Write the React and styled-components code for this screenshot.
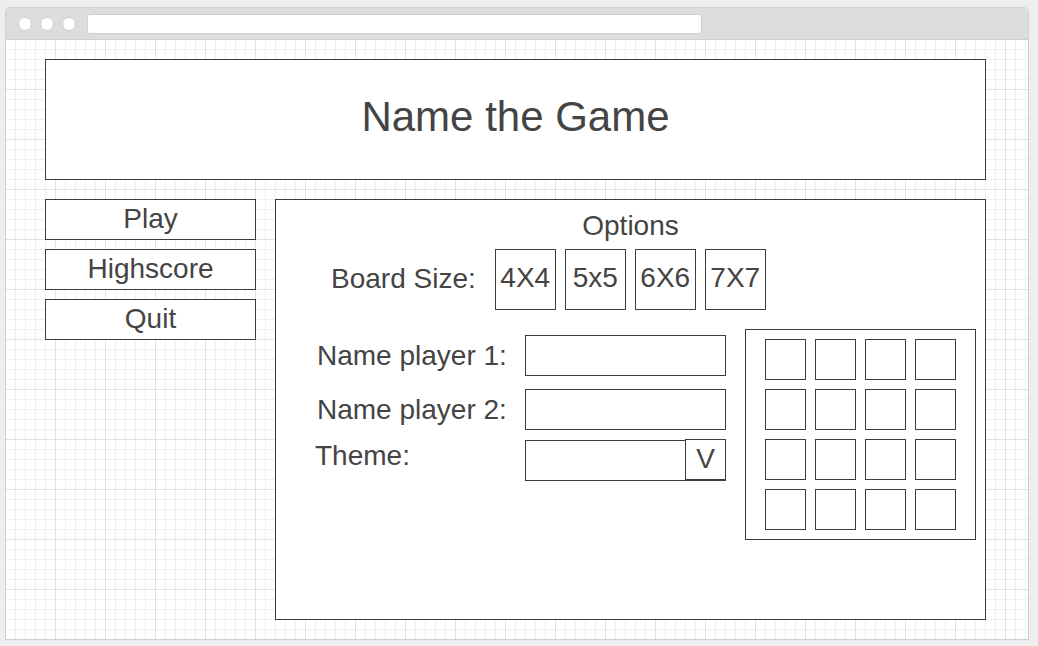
import React from "react";
import styled, { createGlobalStyle } from "styled-components";

const Global = createGlobalStyle`
  html, body { margin: 0; padding: 0; background: #eeeeee; }
  body { font-family: "Liberation Sans", Arial, sans-serif; color: #444; }
  * { box-sizing: border-box; }
`;

const Page = styled.div`
  width: 1038px;
  height: 646px;
  padding: 7px 9px 0 5px;
`;

const Window = styled.div`
  width: 1024px;
  height: 633px;
  border: 1px solid #cfcfcf;
  border-radius: 5px 5px 0 0;
  background: #fff;
  display: flex;
  flex-direction: column;
  overflow: hidden;
`;

const TitleBar = styled.div`
  height: 32px;
  flex: none;
  background: #dddddd;
  border-bottom: 1px solid #cfcfcf;
  display: flex;
  align-items: center;
  padding-left: 12px;
  gap: 8px;
`;

const Dot = styled.span`
  width: 14px;
  height: 14px;
  border-radius: 50%;
  background: #fff;
  border: 1px solid #cfcfcf;
`;

const UrlBar = styled.div`
  margin-left: 3px;
  width: 615px;
  height: 20px;
  background: #fff;
  border: 1px solid #cfcfcf;
  border-radius: 3px;
`;

const Canvas = styled.div`
  flex: 1;
  background-color: #fff;
  background-image:
    linear-gradient(to right, #e2e2e2 1px, transparent 1px),
    linear-gradient(to bottom, #e2e2e2 1px, transparent 1px),
    linear-gradient(to right, #efefef 1px, transparent 1px),
    linear-gradient(to bottom, #efefef 1px, transparent 1px);
  background-size: 50px 50px, 50px 50px, 10px 10px, 10px 10px;
  background-position: 49px 49px, 49px 49px, 9px 9px, 9px 9px;
  padding: 19px 0 0 39px;
  display: flex;
  flex-direction: column;
  gap: 19px;
`;

const Box = styled.div`
  border: 1px solid #3d3d3d;
  background: #fff;
`;

const Header = styled(Box)`
  width: 941px;
  height: 121px;
  display: flex;
  align-items: center;
  justify-content: center;
  font-size: 42px;
  color: #444;
  padding-bottom: 5px;
`;

const Main = styled.div`
  display: flex;
  gap: 19px;
  align-items: flex-start;
`;

const Menu = styled.div`
  display: flex;
  flex-direction: column;
  gap: 9px;
  width: 211px;
`;

const MenuButton = styled(Box)`
  height: 41px;
  display: flex;
  align-items: center;
  justify-content: center;
  font-size: 28px;
  line-height: 32px;
  padding-bottom: 2px;
`;

const Options = styled(Box)`
  width: 711px;
  height: 421px;
  display: flex;
  flex-direction: column;
`;

const OptionsTitle = styled.div`
  font-size: 28px;
  text-align: center;
  margin-top: 10px;
  line-height: 32px;
`;

const BoardRow = styled.div`
  display: flex;
  align-items: center;
  margin-top: 7px;
  padding-left: 55px;
`;

const Label = styled.div`
  font-size: 28px;
  line-height: 32px;
  width: ${(p) => p.$w || "auto"};
  margin-top: ${(p) => p.$mt || "0"};
  margin-left: ${(p) => p.$ml || "0"};
  padding-bottom: ${(p) => p.$pb || "0"};
`;

const Sizes = styled.div`
  display: flex;
  gap: 9px;
  margin-left: 19px;
`;

const SizeBox = styled(Box)`
  width: 61px;
  height: 61px;
  display: flex;
  align-items: center;
  justify-content: center;
  font-size: 28px;
  line-height: 32px;
  padding-bottom: 4px;
`;

const Lower = styled.div`
  display: flex;
  justify-content: space-between;
  margin-top: 19px;
  padding-left: 41px;
  padding-right: 9px;
`;

const Form = styled.div`
  display: flex;
  flex-direction: column;
  padding-top: 6px;
  gap: 13px;
`;

const FieldRow = styled.div`
  display: flex;
  align-items: ${(p) => p.$align || "center"};
  margin-top: ${(p) => p.$mt || "0"};
`;

const Input = styled(Box)`
  width: ${(p) => p.$w || "201px"};
  height: 41px;
`;

const Select = styled.div`
  display: flex;
  align-items: flex-start;
  margin-top: 1px;
`;

const Caret = styled(Box)`
  width: 41px;
  height: 42px;
  margin-left: -1px;
  margin-top: -1px;
  border-bottom-width: 2px;
  display: flex;
  align-items: center;
  justify-content: center;
  font-size: 28px;
  line-height: 32px;
  padding-bottom: 1px;
`;

const Board = styled(Box)`
  width: 231px;
  height: 211px;
  padding: 9px 0 0 19px;
  display: grid;
  grid-template-columns: repeat(4, 41px);
  grid-auto-rows: 41px;
  gap: 9px;
  align-content: start;
`;

const Cell = styled(Box)``;

export default function App() {
  return (
    <Page>
      <Global />
      <Window>
        <TitleBar>
          <Dot />
          <Dot />
          <Dot />
          <UrlBar />
        </TitleBar>
        <Canvas>
          <Header>Name the Game</Header>
          <Main>
            <Menu>
              <MenuButton>Play</MenuButton>
              <MenuButton>Highscore</MenuButton>
              <MenuButton>Quit</MenuButton>
            </Menu>
            <Options>
              <OptionsTitle>Options</OptionsTitle>
              <BoardRow>
                <Label $pb="2px">Board Size:</Label>
                <Sizes>
                  <SizeBox>4X4</SizeBox>
                  <SizeBox>5x5</SizeBox>
                  <SizeBox>6X6</SizeBox>
                  <SizeBox>7X7</SizeBox>
                </Sizes>
              </BoardRow>
              <Lower>
                <Form>
                  <FieldRow>
                    <Label $w="208px">Name player 1:</Label>
                    <Input />
                  </FieldRow>
                  <FieldRow>
                    <Label $w="208px">Name player 2:</Label>
                    <Input />
                  </FieldRow>
                  <FieldRow $align="flex-start" $mt="-4px">
                    <Label $w="210px" $mt="1px" $ml="-2px">Theme:</Label>
                    <Select>
                      <Input $w="161px" />
                      <Caret>V</Caret>
                    </Select>
                  </FieldRow>
                </Form>
                <Board>
                  {Array.from({ length: 16 }).map((_, i) => (
                    <Cell key={i} />
                  ))}
                </Board>
              </Lower>
            </Options>
          </Main>
        </Canvas>
      </Window>
    </Page>
  );
}
